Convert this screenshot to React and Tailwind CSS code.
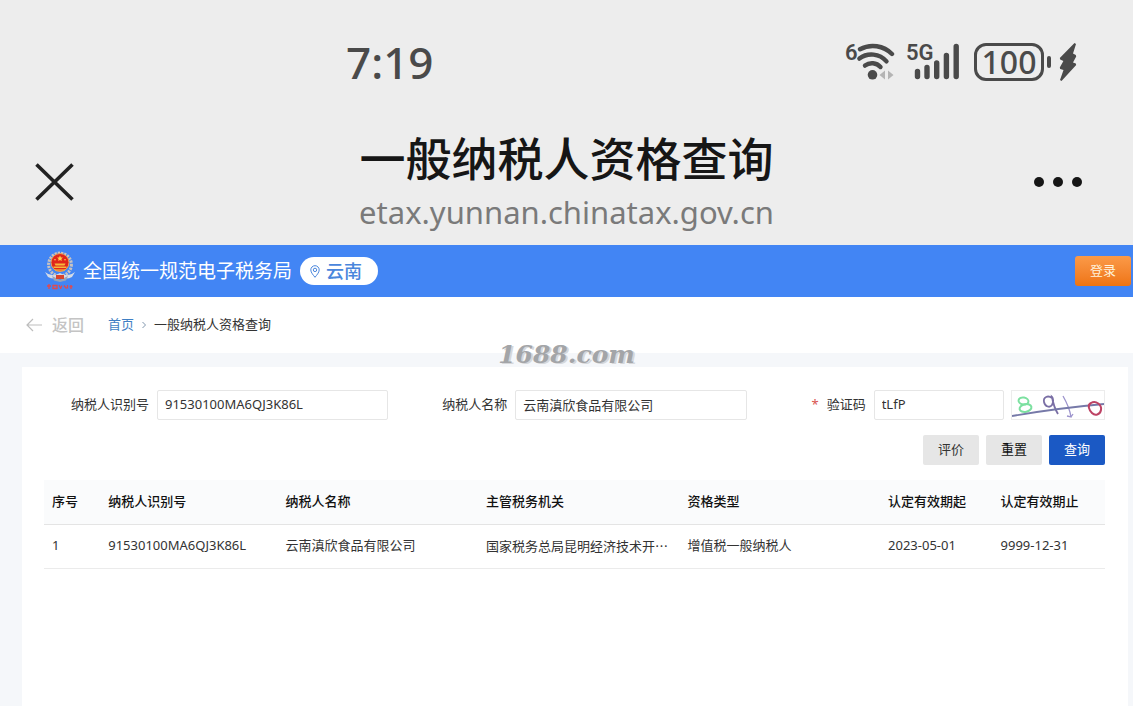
import React from "react";

const sans = "font-['Noto_Sans','Noto_Sans_CJK_SC',sans-serif]";

function WifiIcon() {
  return (
    <svg viewBox="0 0 40 38" className="h-[38px] w-10" fill="none" aria-hidden="true">
      <g stroke="#4a4a4a" strokeWidth="4.4" strokeLinecap="round">
        <path d="M4 6.2 A27 27 0 0 1 36 11" />
        <path d="M3.4 15.6 A20 20 0 0 1 30.500 18.400" />
        <path d="M9 22.600 A11.500 11.500 0 0 1 24.500 24" />
      </g>
      <circle cx="16.500" cy="31.800" r="4.800" fill="#4a4a4a" />
      <path d="M29 27.500 L23.500 32 L29 36.500 Z M32 27.500 L37.500 32 L32 36.500 Z" fill="#b4b4b4" />
    </svg>
  );
}

function SignalIcon() {
  return (
    <svg viewBox="0 0 46 38" className="h-[38px] w-[46px]" stroke="#4a4a4a" strokeWidth="5.400" strokeLinecap="round" aria-hidden="true">
      <path d="M3.500 28.500V33.500M13 24.500V33.500M22.700 20V33.500M32.400 12.500V33.500M42.200 3.500V33.500" />
    </svg>
  );
}

function StatusBar() {
  return (
    <div className="grid h-[124px] grid-cols-[1fr_auto] items-center pl-[346px] pr-14 text-[#4a4a4a]">
      <time className="text-[44px] font-medium leading-none">7:19</time>
      <div className="flex items-center">
        <div className="relative mr-[18px] pl-[11px]">
          <span className="absolute left-0 top-0 font-['Roboto',sans-serif] text-[22px] font-semibold leading-5">6</span>
          <WifiIcon />
        </div>
        <div className="relative mr-[14px]">
          <span className="absolute -left-2 top-0 font-['Roboto',sans-serif] text-[22px] font-semibold leading-5">5G</span>
          <SignalIcon />
        </div>
        <div className="flex h-[38px] w-[70px] items-center justify-center rounded-xl border-3 border-[#4a4a4a] text-[32px] font-medium leading-none">
          100
        </div>
        <span className="ml-[3px] h-3 w-1 rounded-full bg-[#4a4a4a]" />
        <svg viewBox="0 0 18 40" className="ml-2 h-10 w-[18px]" fill="#4a4a4a" aria-hidden="true">
          <path d="M15.500 1 L.8 16 L1.200 17.500 L4.400 19 L.8 25.500 L1.200 27 L4.500 28 L1 38 L2.500 39 L17.200 23 L16.800 21.500 L14 20.500 L17.200 14.500 L16.800 13 L14 11.500 L17 2 Z" />
        </svg>
      </div>
    </div>
  );
}

function BrowserBar() {
  return (
    <div className="grid grid-cols-[1fr_auto_1fr] items-center px-[35px] pb-[9px] pt-1">
      <button type="button" aria-label="关闭" className="justify-self-start">
        <svg viewBox="0 0 39 38" className="h-[38px] w-[39px]" stroke="#222" strokeWidth="3.600" aria-hidden="true">
          <path d="M1.500 1.500L37.500 36.500M37.500 1.500L1.500 36.500" />
        </svg>
      </button>
      <div className="text-center">
        <h1 className="text-[46px] font-medium leading-[60px] text-[#161616]">一般纳税人资格查询</h1>
        <p className="text-[31px] leading-[48px] text-[#7a7a7a]">etax.yunnan.chinatax.gov.cn</p>
      </div>
      <button type="button" aria-label="更多" className="mr-4 flex gap-[9px] justify-self-end">
        <span className="size-[10px] rounded-full bg-[#161616]" />
        <span className="size-[10px] rounded-full bg-[#161616]" />
        <span className="size-[10px] rounded-full bg-[#161616]" />
      </button>
    </div>
  );
}

function Emblem() {
  return (
    <svg viewBox="0 0 32 40" className="h-10 w-8" aria-hidden="true">
      <circle cx="16" cy="13.500" r="11.400" fill="none" stroke="#c9c3c0" strokeWidth="3" strokeDasharray="2.200 1" />
      <path d="M1 21 Q8 27 16 22 Q24 27 31 21 L28 26 Q22 29 16 26 Q10 29 4 26 Z" fill="#d5dbe6" />
      <path d="M8 25 L16 29 L24 25 L22 29.500 L16 31 L10 29.500 Z" fill="#9aa3b5" />
      <path d="M12 24h8v4h-8z" fill="#d8432c" />
      <circle cx="16" cy="11.500" r="9" fill="#e0261b" stroke="#e9a25a" strokeWidth="1" />
      <path d="M16 4.500l.9 1.900 2 .2-1.500 1.400.4 2-1.800-1-1.800 1 .4-2-1.500-1.400 2-.2z" fill="#ffd24a" />
      <circle cx="11" cy="8.800" r=".8" fill="#ffd24a" />
      <circle cx="21" cy="8.800" r=".8" fill="#ffd24a" />
      <path d="M10.500 12.500h11l-1 2h-9zM9.500 15.500h13v1.500h-13z" fill="#f6b73c" />
      <path d="M11 19h10" stroke="#f6b73c" strokeWidth="1.200" />
      <g stroke="#e24a4e" strokeWidth="1.300" fill="none">
        <path d="M3 35h4M5 33v5M9 34.500h4v3h-4zM15 34l2 4M18 34.500l-1.500 3M20 34.500l2.500 3M23.500 34v3.500M25.500 35.500h3M27 34v4" />
      </g>
    </svg>
  );
}

function SiteHeader() {
  return (
    <header className="flex h-[52px] items-center bg-[#4285f4] pl-11 pr-[2px] text-white">
      <Emblem />
      <span className="ml-[7px] text-[19px] leading-7">全国统一规范电子税务局</span>
      <button type="button" className="ml-2 flex h-7 items-center rounded-full bg-white pl-[10px] pr-4 text-[#4a86dc]">
        <svg viewBox="0 0 10 13" className="mr-[6px] h-[13px] w-[10px]" fill="none" stroke="currentColor" strokeWidth="1" aria-hidden="true">
          <path d="M5 12.300C3.400 10.200.8 7.600.8 4.900a4.200 4.200 0 0 1 8.400 0C9.200 7.600 6.600 10.200 5 12.300Z" />
          <circle cx="5" cy="4.900" r="1.700" />
        </svg>
        <span className="text-[18px] font-medium leading-7">云南</span>
      </button>
      <button
        type="button"
        className="ml-auto h-[30px] w-14 rounded-[3px] bg-linear-to-b from-[#fb9a47] to-[#ee7410] text-[13px] text-[#fff3dd]"
      >
        登录
      </button>
    </header>
  );
}

function Breadcrumb() {
  return (
    <nav className="flex h-14 items-center bg-white pl-[26px] text-[13px] text-[#333]">
      <a href="#back" className="flex items-center gap-[10px] text-[16px] font-medium text-[#c4c4c4]">
        <svg viewBox="0 0 16 14" className="h-[14px] w-4" fill="none" stroke="#bdbdbd" strokeWidth="1.200" aria-hidden="true">
          <path d="M16 7H1M7 1L1 7l6 6" />
        </svg>
        返回
      </a>
      <a href="#home" className="ml-6 text-[#3f7fc4]">首页</a>
      <svg viewBox="0 0 4 8" className="mx-2 h-2 w-1" fill="none" stroke="#8096ad" aria-hidden="true">
        <path d="M.5 1l3 3-3 3" />
      </svg>
      <span>一般纳税人资格查询</span>
    </nav>
  );
}

function Field({ id, label, value, required, children }) {
  return (
    <div className="flex items-center">
      <label htmlFor={id} className="w-[113px] shrink-0 pr-2 text-right text-[#333]">
        {required && <span className="mr-2 text-[#d9534f]">*</span>}
        {label}
      </label>
      <input
        id={id}
        defaultValue={value}
        className="h-[30px] w-0 min-w-0 grow rounded-[2px] border border-[#e6e6e6] bg-white px-[7px] pb-[2px] text-[#333] outline-none"
      />
      {children}
    </div>
  );
}

function Captcha() {
  return (
    <svg viewBox="1 1 92 28" className="ml-[7px] h-[30px] w-[94px] shrink-0 border border-[#ececec]" fill="none" role="img" aria-label="验证码图片">
      <g stroke="#7ce0a0" strokeWidth="2">
        <ellipse cx="12.500" cy="11" rx="5" ry="3.500" transform="rotate(10 12.500 11)" />
        <ellipse cx="14.500" cy="18" rx="6" ry="3.800" transform="rotate(-12 14.500 18)" />
      </g>
      <path d="M41 8c-4-3-9-1-8 4s6 6 8 3 1-7 0-8c1 6 3 12 6 17" stroke="#7a6fa5" strokeWidth="1.800" />
      <path d="M52 6c4 7 7 14 8 21l-4-1M60 27l2-3" stroke="#9c93cc" strokeWidth="1.300" />
      <path d="M1 26C30 21 60 17 93 14" stroke="#7679a8" strokeWidth="1.800" />
      <path d="M80 13c5-3 11 2 10 7s-6 6-9 3-5-8-1-10Z" stroke="#bd4264" strokeWidth="2" />
    </svg>
  );
}

function SearchForm() {
  return (
    <form onSubmit={(e) => e.preventDefault()}>
      <div className="grid grid-cols-3 gap-[14px]">
        <Field id="taxpayer-id" label="纳税人识别号" value="91530100MA6QJ3K86L" />
        <Field id="taxpayer-name" label="纳税人名称" value="云南滇欣食品有限公司" />
        <Field id="captcha" label="验证码" value="tLfP" required>
          <Captcha />
        </Field>
      </div>
      <div className="mt-[15px] flex justify-end gap-[7px]">
        <button type="button" className="h-[30px] w-14 rounded-[2px] bg-[#e6e6e6] text-[#333]">评价</button>
        <button type="reset" className="h-[30px] w-14 rounded-[2px] bg-[#e6e6e6] text-[#111]">重置</button>
        <button type="submit" className="h-[30px] w-14 rounded-[2px] bg-[#1b59c4] text-white">查询</button>
      </div>
    </form>
  );
}

const columns = [
  { title: "序号", width: "w-[5.300%]" },
  { title: "纳税人识别号", width: "w-[16.700%]" },
  { title: "纳税人名称", width: "w-[18.900%]" },
  { title: "主管税务机关", width: "w-[19%]" },
  { title: "资格类型", width: "w-[18.900%]" },
  { title: "认定有效期起", width: "w-[10.600%]" },
  { title: "认定有效期止", width: "w-[10.600%]" },
];

const rows = [
  ["1", "91530100MA6QJ3K86L", "云南滇欣食品有限公司", "国家税务总局昆明经济技术开…", "增值税一般纳税人", "2023-05-01", "9999-12-31"],
];

function ResultTable() {
  return (
    <table className="mt-[15px] w-full table-fixed text-left">
      <thead>
        <tr className="h-11 border-b border-[#e4e4e4] bg-[#fafbfc]">
          {columns.map((c) => (
            <th key={c.title} className={`${c.width} whitespace-nowrap px-2 font-medium text-[#111]`}>
              {c.title}
            </th>
          ))}
        </tr>
      </thead>
      <tbody>
        {rows.map((row) => (
          <tr key={row[0]} className="h-11 border-b border-[#ebebeb] text-[#333]">
            {row.map((cell, i) => (
              <td
                key={i}
                className={i === 3 ? "whitespace-nowrap px-2 font-['Noto_Sans_CJK_SC',sans-serif]" : "whitespace-nowrap px-2"}
              >
                {cell}
              </td>
            ))}
          </tr>
        ))}
      </tbody>
    </table>
  );
}

export default function App() {
  return (
    <div lang="zh-CN" className={`${sans} flex min-h-screen flex-col bg-[#f5f7fa]`}>
      <div className="bg-[#ededed]">
        <StatusBar />
        <BrowserBar />
      </div>
      <SiteHeader />
      <div className="relative">
        <Breadcrumb />
        <div className="pointer-events-none absolute inset-x-0 -bottom-4 text-center font-['DejaVu_Serif',serif] text-[25px] font-bold italic leading-7 text-[#a3a5a8] [text-shadow:2px_1px_0_#d6d7da]">
          1688.com
        </div>
      </div>
      <main className="ml-[22px] mr-[5px] mt-[14px] grow bg-white pl-[22px] pr-[23px] pt-[23px] text-[13px]">
        <SearchForm />
        <ResultTable />
      </main>
    </div>
  );
}
